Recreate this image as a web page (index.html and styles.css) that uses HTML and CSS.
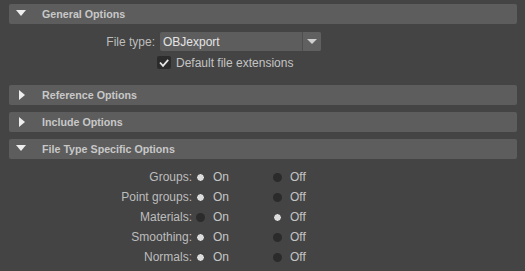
FILE: index.html
```html
<!DOCTYPE html>
<html lang="en">
  <head>
    <meta charset="UTF-8" />
    <title>OBJexport Options</title>
    <link rel="stylesheet" href="styles.css">
  </head>
  <body>
    <div class="panel">
      <!-- General -->
      <div class="section">
        <div class="frame-header">
          <span class="arrow down"></span>
          <span class="frame-title">General Options</span>
        </div>
        <div class="frame-body general">
          <div class="row">
            <span class="label wide">File type:</span>
            <div class="dropdown">
              <span class="dropdown-value">OBJexport</span>
              <span class="dropdown-btn"><span class="caret"></span></span>
            </div>
          </div>
          <div class="row check-row">
            <span class="checkbox">
              <svg width="14" height="13" viewBox="0 0 14 13">
                <path d="M3 6.5 L6 9.8 L11.2 3.8" fill="none" stroke="#e6e6e6" stroke-width="1.8" />
              </svg>
            </span>
            <span class="check-label">Default file extensions</span>
          </div>
        </div>
      </div>

      <div class="section">
        <div class="frame-header">
          <span class="arrow right"></span>
          <span class="frame-title">Reference Options</span>
        </div>
      </div>

      <div class="section">
        <div class="frame-header">
          <span class="arrow right"></span>
          <span class="frame-title">Include Options</span>
        </div>
      </div>

      <div class="section">
        <div class="frame-header">
          <span class="arrow down"></span>
          <span class="frame-title">File Type Specific Options</span>
        </div>
        <div class="frame-body radios">
          <div class="radio-row">
            <span class="label">Groups:</span>
            <span class="radio on"></span><span class="opt">On</span>
            <span class="radio"></span><span class="opt">Off</span>
          </div>
          <div class="radio-row">
            <span class="label">Point groups:</span>
            <span class="radio on"></span><span class="opt">On</span>
            <span class="radio"></span><span class="opt">Off</span>
          </div>
          <div class="radio-row">
            <span class="label">Materials:</span>
            <span class="radio"></span><span class="opt">On</span>
            <span class="radio on"></span><span class="opt">Off</span>
          </div>
          <div class="radio-row">
            <span class="label">Smoothing:</span>
            <span class="radio on"></span><span class="opt">On</span>
            <span class="radio"></span><span class="opt">Off</span>
          </div>
          <div class="radio-row">
            <span class="label">Normals:</span>
            <span class="radio on"></span><span class="opt">On</span>
            <span class="radio"></span><span class="opt">Off</span>
          </div>
        </div>
      </div>
    </div>
  </body>
</html>
```

FILE: styles.css
```css
* {
  box-sizing: border-box;
}
html,
body {
  margin: 0;
  height: 100%;
}
body {
  background: #444444;
  font-family: "Liberation Sans", Arial, sans-serif;
  font-size: 12px;
  color: #bdbdbd;
}
.panel {
  display: flex;
  flex-direction: column;
  gap: 7px;
  padding: 4px 8px 0 9px;
}
.frame-header {
  height: 20px;
  background: #5d5d5d;
  border-radius: 2px;
  display: flex;
  align-items: center;
}
.frame-title {
  font-weight: bold;
  font-size: 10.7px;
  color: #c8c8c8;
}
.arrow {
  width: 33px;
  height: 20px;
  position: relative;
  flex: none;
}
.arrow.down::before {
  content: "";
  position: absolute;
  left: 7px;
  top: 6px;
  border-left: 5.5px solid transparent;
  border-right: 5.5px solid transparent;
  border-top: 6px solid #eeeeee;
}
.arrow.right::before {
  content: "";
  position: absolute;
  left: 10px;
  top: 5px;
  border-top: 5px solid transparent;
  border-bottom: 5px solid transparent;
  border-left: 6px solid #eeeeee;
}
.frame-body.general {
  padding: 8px 0 9px;
  display: flex;
  flex-direction: column;
  gap: 5px;
}
.row {
  display: flex;
  align-items: center;
}
.label {
  text-align: right;
  width: 183px;
  flex: none;
}
.label.wide {
  width: 146px;
  margin-right: 5px;
}
.dropdown {
  width: 161px;
  height: 19px;
  background: #5d5d5d;
  border-radius: 2px;
  display: flex;
  align-items: stretch;
}
.dropdown-value {
  flex: 1;
  color: #e4e4e4;
  padding-left: 3px;
  display: flex;
  align-items: center;
}
.dropdown-btn {
  width: 19px;
  border-left: 1px solid #4e4e4e;
  border-radius: 0 2px 2px 0;
  background: #606060;
  display: flex;
  align-items: center;
  justify-content: center;
}
.caret {
  border-left: 5px solid transparent;
  border-right: 5px solid transparent;
  border-top: 5px solid #d0d0d0;
}
.check-row {
  padding-left: 148px;
  height: 13px;
}
.checkbox {
  width: 14px;
  height: 13px;
  background: #2b2b2b;
  border-radius: 2px;
  display: flex;
}
.check-label {
  margin-left: 5px;
  color: #c4c4c4;
}
.frame-body.radios {
  padding-top: 8px;
  display: flex;
  flex-direction: column;
}
.radio-row {
  height: 20px;
  display: flex;
  align-items: center;
}
.radio {
  width: 9px;
  height: 9px;
  border-radius: 50%;
  background: #2b2b2b;
  margin-left: 4px;
  flex: none;
}
.radio.on {
  background: #dcdcdc;
  border: 1.5px solid #2b2b2b;
}
.opt {
  margin-left: 8px;
  width: 56px;
  color: #c4c4c4;
}
```
